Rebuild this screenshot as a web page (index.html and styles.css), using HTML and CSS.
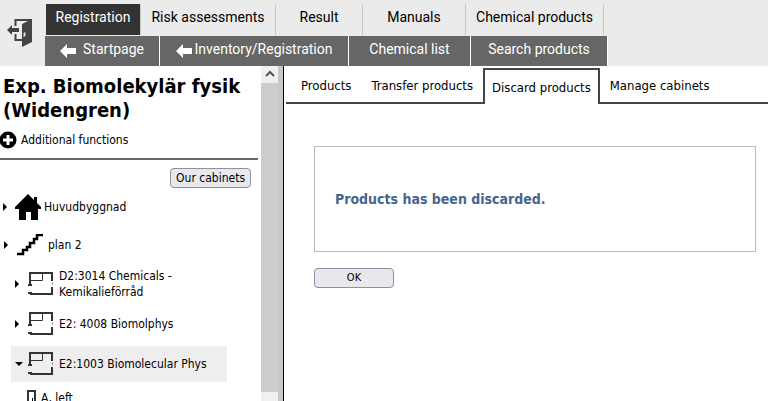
FILE: index.html
```html
<!DOCTYPE html>
<html lang="en">
<head>
    <meta charset="UTF-8">
    <meta name="viewport" content="width=device-width, initial-scale=1.0">
    <title>Discard products</title>
    <link rel="stylesheet" href="styles.css">
</head>
<body>

<!-- Shared shapes -->
<svg class="defs" aria-hidden="true">
    <symbol id="arrow" viewBox="0 0 16 14"><path d="M0 7L7 0v4h9v6H7v4z" fill="#fff"/></symbol>
    <symbol id="room" viewBox="0 0 26 24">
        <path d="M2 13V1h22v8M24 15v7H2M0 13h4M0 21h4" fill="none" stroke="#333" stroke-width="2"/>
        <path d="M3 8.500h11.500V2" fill="none" stroke="#333"/>
        <path d="M24 11h1v1h-1z" fill="#333"/>
    </symbol>
</svg>

<header class="topbar">
    <a class="logout" href="#" aria-label="Log out">
        <svg width="26" height="28" viewBox="0 0 26 28">
            <path d="M8.500 7V1H25M8.500 15v6H15" fill="none" stroke="#444" stroke-width="2"/>
            <path d="M15 5l10-5v23l-10 5z" fill="#444"/>
            <path d="M16.500 14l2-1v4l-2 1z" fill="#ddd"/>
            <path d="M0 11l5-5v3h7v4H5v3z" fill="#444"/>
        </svg>
    </a>
    <nav>
        <ul class="menu">
            <li><a class="registration active" href="#">Registration</a></li>
            <li><a class="risk" href="#">Risk assessments</a></li>
            <li><a class="result" href="#">Result</a></li>
            <li><a class="manuals" href="#">Manuals</a></li>
            <li><a class="chemical" href="#">Chemical products</a></li>
        </ul>
        <ul class="submenu">
            <li><a class="start" href="#"><svg width="16" height="14"><use href="#arrow"/></svg>Startpage</a></li>
            <li><a class="inventory" href="#"><svg width="16" height="14"><use href="#arrow"/></svg>Inventory/Registration</a></li>
            <li><a class="list" href="#">Chemical list</a></li>
            <li><a class="search" href="#">Search products</a></li>
        </ul>
    </nav>
</header>

<div class="content">
    <aside class="sidebar">
        <div class="sidebar-body">
            <h1>Exp. Biomolekylär fysik (Widengren)</h1>
            <a class="functions" href="#">
                <svg width="17" height="18" viewBox="0 0 17 18">
                    <circle cx="8" cy="9" r="8.500"/>
                    <path d="M8 4v10M3 9h10" stroke="#fff" stroke-width="3"/>
                </svg>
                Additional functions
            </a>
            <hr>
            <div class="actions"><button type="button">Our cabinets</button></div>
            <ul class="tree">
                <li class="building">
                    <span class="closed"></span>
                    <svg width="26" height="26" viewBox="0 0 26 26"><path d="M13 0l6 6V3h3v6l4 4v2h-3v11h-7v-8h-5v8H4V15H0v-2z"/></svg>
                    <a href="#">Huvudbyggnad</a>
                </li>
                <li class="floor">
                    <span class="closed"></span>
                    <svg width="26" height="22" viewBox="0 0 26 22"><path d="M0 20h6v-4h4v-3h3v-4h4V5h3V1h6" fill="none" stroke="#000" stroke-width="2.500"/></svg>
                    <a href="#">plan 2</a>
                </li>
                <li class="room">
                    <span class="closed"></span>
                    <svg width="26" height="24"><use href="#room"/></svg>
                    <a href="#">D2:3014 Chemicals - Kemikalieförråd</a>
                </li>
                <li class="room">
                    <span class="closed"></span>
                    <svg width="26" height="24"><use href="#room"/></svg>
                    <a href="#">E2: 4008 Biomolphys</a>
                </li>
                <li class="room selected">
                    <span class="open"></span>
                    <svg width="26" height="24"><use href="#room"/></svg>
                    <a href="#">E2:1003 Biomolecular Phys</a>
                </li>
                <li class="cabinet">
                    <svg width="9" height="16" viewBox="0 0 9 16"><path d="M1 1h7v14H1z" fill="#fff" stroke="#333" stroke-width="2"/><path d="M5 8h1v3H5z"/></svg>
                    <a href="#">A, left</a>
                </li>
            </ul>
        </div>
        <div class="scrollbar">
            <svg width="17" height="17" viewBox="0 0 17 17"><path d="M5 10l4-4 4 4" fill="none" stroke="#555" stroke-width="2"/></svg>
            <div class="thumb"></div>
        </div>
    </aside>

    <main>
        <ul class="tabs">
            <li><a href="#">Products</a></li>
            <li><a href="#">Transfer products</a></li>
            <li class="current"><a href="#">Discard products</a></li>
            <li><a href="#">Manage cabinets</a></li>
        </ul>
        <div class="message">Products has been discarded.</div>
        <button type="button" class="ok-button">OK</button>
    </main>
</div>

</body>
</html>
```

FILE: styles.css
```css
* {
    box-sizing: border-box;
}
body {
    margin: 0;
    height: 100vh;
    display: flex;
    flex-direction: column;
    overflow: hidden;
    background-color: #fff;
    color: #000;
    font-family: Tahoma, "DejaVu Sans Condensed", "DejaVu Sans", sans-serif;
    font-size: 12px;
    line-height: 16px;
}
ul {
    list-style-type: none;
    margin: 0;
    padding: 0;
}
a {
    color: inherit;
    text-decoration: none;
}
.defs {
    display: none;
}

/* Top menu */
.topbar {
    display: flex;
    background-color: #ebebeb;
    font-family: Roboto, sans-serif;
    font-size: 14px;
}
.logout {
    width: 45px;
    padding: 19px 0 0 7px;
}
.menu, .submenu {
    display: flex;
}
.menu {
    padding: 4px 0 1px 1px;
}
.menu a {
    display: block;
    height: 31px;
    padding-top: 5px;
    border-right: 1px solid #c8c8c8;
    text-align: center;
}
.menu .active {
    background-color: #333;
    color: #fff;
}
.registration {
    width: 95px;
}
.risk {
    width: 135px;
}
.result {
    width: 87px;
}
.manuals {
    width: 103px;
}
.chemical {
    width: 138px;
}
.submenu a {
    display: flex;
    align-items: center;
    justify-content: center;
    height: 30px;
    padding-bottom: 4px;
    border-right: 1px solid #fff;
    background-color: #666;
    color: #fff;
}
.submenu svg {
    margin-top: 4px;
}
.start {
    width: 115px;
    gap: 7px;
}
.inventory {
    width: 189px;
    gap: 3px;
}
.list {
    width: 122px;
}
.search {
    width: 137px;
}

.content {
    display: flex;
    flex: 1;
    min-height: 0;
}

/* Cabinet tree */
.sidebar {
    display: flex;
    flex: none;
    width: 284px;
    padding-right: 5px;
    border-right: 1px solid #000;
    background-color: #c8c8c8;
}
.sidebar-body {
    flex: 1;
    padding-right: 3px;
    background-color: #fff;
    overflow: hidden;
}
h1 {
    margin: 8px 0 9px 3px;
    font-size: 20px;
    line-height: 24px;
}
.functions {
    display: flex;
    align-items: center;
    gap: 4px;
}
hr {
    height: 2px;
    margin: 9px 0 8px;
    border: 0;
    background-color: #666;
}
button {
    height: 20px;
    padding: 0 5px;
    border: 1px solid #8f8f9d;
    border-radius: 4px;
    background-color: #e9e9ed;
    color: #000;
    font-family: inherit;
    font-size: 12px;
    line-height: 16px;
}
.actions {
    display: flex;
    justify-content: flex-end;
    padding-right: 7px;
}
.tree li {
    display: flex;
    align-items: center;
    height: 36px;
    margin-bottom: 4px;
}
.tree svg {
    flex: none;
}
.tree .building {
    gap: 3px;
    height: 38px;
    margin-bottom: 0;
    padding-left: 3px;
}
.building .closed {
    margin-right: 5px;
}
.tree .floor {
    gap: 5px;
    height: 38px;
    margin-bottom: 2px;
    padding-left: 4px;
}
.floor .closed {
    margin-right: 4px;
}
.tree .room {
    gap: 5px;
    width: 216px;
    margin-left: 11px;
    padding-left: 4px;
}
.room .closed {
    margin-right: 4px;
}
.tree .cabinet {
    align-items: flex-start;
    gap: 5px;
    padding: 4px 0 0 27px;
}
.tree .selected {
    background-color: #eee;
}
.closed, .open {
    flex: none;
    border: 4px solid transparent;
}
.closed {
    width: 4px;
    border-left-color: #000;
    border-right-width: 0;
}
.open {
    width: 8px;
    height: 4px;
    border-width: 4px 4px 0;
    border-top-color: #000;
}
.scrollbar {
    display: flex;
    flex-direction: column;
    width: 17px;
    padding-bottom: 9px;
    background-color: #f0f0f0;
}
.thumb {
    flex: 1;
    background-color: #cdcdcd;
}

/* Product pages */
main {
    flex: 1;
    padding-left: 2px;
}
.tabs {
    display: flex;
    padding-top: 2px;
    font-size: 13px;
}
.tabs li {
    height: 36px;
    padding: 10px 10px 0;
    border-bottom: 2px solid #444;
}
.tabs li:first-child {
    padding-left: 15px;
}
.tabs li:last-child {
    flex: 1;
}
.tabs .current {
    padding: 10px 7px 0;
    border: 2px solid #444;
    border-bottom: 0;
}
.message {
    display: flex;
    align-items: center;
    height: 106px;
    margin: 42px 12px 16px 28px;
    padding-left: 20px;
    border: 1px solid #bbb;
    color: #436690;
    font-size: 14px;
    font-weight: bold;
}
.ok-button {
    width: 80px;
    margin-left: 28px;
    font-size: 11px;
}
```
